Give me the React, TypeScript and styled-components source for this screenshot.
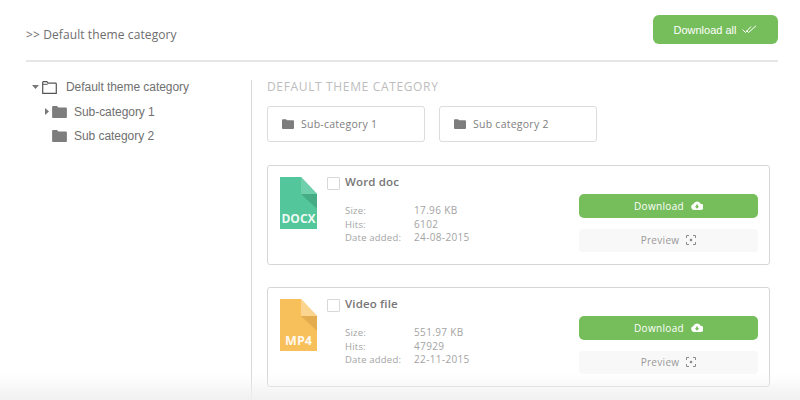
import React from "react";
import styled, { createGlobalStyle } from "styled-components";

const Global = createGlobalStyle`
  html, body { margin: 0; padding: 0; background: #fff; overflow: hidden; }
  body { width: 800px; height: 400px; font-family: "Open Sans", sans-serif; }
`;

const Page = styled.div`
  width: 800px; height: 400px; overflow: hidden; position: relative;
  padding: 15px 22px 0 26px; box-sizing: border-box;
`;
const Header = styled.header`
  display: flex; justify-content: space-between; align-items: flex-start;
  height: 45px; border-bottom: 2px solid #e6e6e6;
  box-sizing: content-box;
`;
const Crumb = styled.div`
  font-size: 12px; line-height: 17px; color: #6e6e6e; letter-spacing: .1px; margin-top: 11px;
`;
const DownloadAll = styled.button`
  width: 125px; height: 29px; border: 0; border-radius: 6px; background: #76bd5b; color: #fff;
  font: 11px "Liberation Sans", sans-serif; display: flex; align-items: center; justify-content: center; gap: 6px;
  padding: 0;
`;
const Body = styled.div`
  display: flex; margin-top: 18px;
`;
const Sidebar = styled.nav`
  width: 226px; height: 320px; border-right: 1px solid #d9d9d9; box-sizing: border-box;
  font-family: "Liberation Sans", sans-serif; font-size: 12px; letter-spacing: -.05px; color: #707070;
`;
const TreeRow = styled.div<{ $level: number }>`
  display: flex; align-items: center; height: 14px; margin-bottom: 10.5px;
  padding-left: ${p => (p.$level === 0 ? 6 : 19)}px;
`;
const Caret = styled.span`
  width: 7px; display: flex; align-items: center; flex: none;
`;
const CaretGap = styled.span`
  width: 3px; flex: none;
`;
const TreeLabel = styled.span<{ $gap: number }>`
  margin-left: ${p => p.$gap}px;
`;
const Main = styled.main`
  flex: 1; padding-left: 15px; min-width: 0;
`;
const Title = styled.h2`
  margin: 0; font-size: 12px; font-weight: 400; color: #bdbdbd; line-height: 14px; letter-spacing: .65px;
`;
const Cats = styled.div`
  display: flex; gap: 14px; margin-top: 12px;
`;
const Cat = styled.div`
  width: 158px; height: 36px; box-sizing: border-box; border: 1px solid #dcdcdc; border-radius: 3px;
  display: flex; align-items: center; gap: 7px; padding-left: 14px;
  font-size: 10.5px; color: #808080; letter-spacing: .25px;
`;
const Card = styled.section`
  width: 503px; height: 100px; box-sizing: border-box; border: 1px solid #d6d6d6; border-radius: 3px;
  margin-top: 23px; display: flex; position: relative; padding: 10px 11px 0 12px;
  & + & { margin-top: 22px; }
`;
const Check = styled.span`
  width: 11px; height: 11px; border: 1px solid #d8d8d8; margin: 1px 5px 0 10px; flex: none; border-radius: 1px;
`;
const Info = styled.div`
  flex: 1;
`;
const Name = styled.div`
  font-size: 11.5px; font-weight: 600; color: #767676; line-height: 12px; letter-spacing: .15px;
`;
const Meta = styled.dl`
  display: grid; grid-template-columns: 69px 1fr; margin: 16px 0 0; line-height: 13.5px; color: #a3a3a3;
  dt { margin: 0; font-size: 9.5px; letter-spacing: .2px; }
  dd { margin: 0; font-size: 10px; letter-spacing: .35px; }
`;
const Actions = styled.div`
  width: 179px; display: flex; flex-direction: column; gap: 11px; margin-top: 18px;
`;
const Primary = styled.button`
  height: 24px; border: 0; border-radius: 5px; background: #76bd5b; color: #fff; padding: 0 0 1px;
  font: 10px "Open Sans", sans-serif; letter-spacing: .35px;
  display: flex; align-items: center; justify-content: center; gap: 7px;
`;
const Secondary = styled.button`
  height: 23px; border: 0; border-radius: 4px; background: #f8f8f8; color: #999; padding: 0 0 1px;
  font: 10px "Open Sans", sans-serif; letter-spacing: .3px;
  display: flex; align-items: center; justify-content: center; gap: 7px;
`;
const Fade = styled.div`
  position: absolute; left: 0; right: 0; bottom: 0; height: 26px; pointer-events: none;
  background: linear-gradient(to bottom, rgba(240,240,240,0), rgba(240,240,240,.95));
`;

const Folder = ({ w, h, color = "#7d7d7d" }: { w: number; h: number; color?: string }) => (
  <svg width={w} height={h} viewBox="0 0 16 13" style={{ flex: "none" }}>
    <path d="M1.2 0h4.2l1.4 1.6h8c.7 0 1.2.5 1.2 1.2v9c0 .7-.5 1.2-1.2 1.2H1.2C.5 13 0 12.500 0 11.800V1.200C0 .5.500 0 1.200 0z" fill={color} />
  </svg>
);
const FolderOpen = () => (
  <svg width="15" height="13" viewBox="0 0 15 13" style={{ flex: "none" }}>
    <path d="M.7 12.300V1.500c0-.4.300-.8.800-.8h3.300l1.300 1.500h7.400c.4 0 .800.300.800.800v9.300z" fill="none" stroke="#555" strokeWidth="1.200" />
    <path d="M.7 3.300h5" stroke="#555" strokeWidth="1" />
  </svg>
);
const CaretDown = () => (
  <svg width="7" height="4" viewBox="0 0 7 4"><path d="M0 0h7L3.500 4z" fill="#777" /></svg>
);
const CaretRight = () => (
  <svg width="4" height="7" viewBox="0 0 4 7"><path d="M0 0v7l4-3.500z" fill="#777" /></svg>
);
const DoubleCheck = () => (
  <svg width="15" height="9" viewBox="0 0 15 9" fill="none" stroke="#fff" strokeWidth="1">
    <path d="M.5 4.500l3 3L9 1.500" />
    <path d="M4.500 5.500l2 2L14 .8" />
  </svg>
);
const Cloud = () => (
  <svg width="12" height="9" viewBox="0 0 12 9">
    <path d="M3 9a3 3 0 0 1-.6-5.900A3.800 3.800 0 0 1 9.500 2.800 3.100 3.100 0 0 1 9.500 9z" fill="#fff" />
    <path d="M6 7.800L3.800 5.300h1.400V3.600h1.600v1.700h1.400z" fill="#76bd5b" />
  </svg>
);
const Focus = () => (
  <svg width="10" height="10" viewBox="0 0 10 10" fill="none" stroke="#8a8a8a" strokeWidth="1">
    <path d="M.5 3V.5H3M7 .5h2.500V3M9.500 7v2.500H7M3 9.500H.5V7" />
    <circle cx="5" cy="5" r="1.300" fill="#8a8a8a" stroke="none" />
  </svg>
);
const FileIcon = ({ label, base, fold, shade, size }: { label: string; base: string; fold: string; shade: string; size: number }) => (
  <svg width="37" height="52" viewBox="0 0 37 52" style={{ flex: "none", marginTop: 1 }}>
    <path d="M0 0h21l16 17v35H0z" fill={base} />
    <path d="M21 0l16 17H21z" fill={fold} />
    <path d="M21 17h16v15z" fill={shade} />
    <text x="18.500" y="46" textAnchor="middle" fontFamily="Open Sans, sans-serif" fontWeight="700" fontSize={size} fill="#fff" fillOpacity=".92">{label}</text>
  </svg>
);

const files = [
  { name: "Word doc", size: "17.96 KB", hits: "6102", date: "24-08-2015", label: "DOCX", base: "#53c79b", fold: "#6fd0ab", shade: "#46ac85", fs: 12 },
  { name: "Video file", size: "551.97 KB", hits: "47929", date: "22-11-2015", label: "MP4", base: "#f8c05a", fold: "#fbd58f", shade: "#e3ad4f", fs: 12.5 },
];

export default function App() {
  return (
    <Page>
      <Global />
      <Header>
        <Crumb>&gt;&gt; Default theme category</Crumb>
        <DownloadAll>Download all <DoubleCheck /></DownloadAll>
      </Header>
      <Body>
        <Sidebar>
          <TreeRow $level={0}>
            <Caret><CaretDown /></Caret>
            <CaretGap />
            <FolderOpen />
            <TreeLabel $gap={9}>Default theme category</TreeLabel>
          </TreeRow>
          <TreeRow $level={1}>
            <Caret><CaretRight /></Caret>
            <Folder w={15} h={12} />
            <TreeLabel $gap={7}>Sub-category 1</TreeLabel>
          </TreeRow>
          <TreeRow $level={1}>
            <Caret />
            <Folder w={15} h={12} />
            <TreeLabel $gap={7}>Sub category 2</TreeLabel>
          </TreeRow>
        </Sidebar>
        <Main>
          <Title>DEFAULT THEME CATEGORY</Title>
          <Cats>
            <Cat><Folder w={12} h={10} />Sub-category 1</Cat>
            <Cat><Folder w={12} h={10} />Sub category 2</Cat>
          </Cats>
          {files.map(f => (
            <Card key={f.name}>
              <FileIcon label={f.label} base={f.base} fold={f.fold} shade={f.shade} size={f.fs} />
              <Check />
              <Info>
                <Name>{f.name}</Name>
                <Meta>
                  <dt>Size:</dt><dd>{f.size}</dd>
                  <dt>Hits:</dt><dd>{f.hits}</dd>
                  <dt>Date added:</dt><dd>{f.date}</dd>
                </Meta>
              </Info>
              <Actions>
                <Primary>Download <Cloud /></Primary>
                <Secondary>Preview <Focus /></Secondary>
              </Actions>
            </Card>
          ))}
        </Main>
      </Body>
      <Fade />
    </Page>
  );
}
